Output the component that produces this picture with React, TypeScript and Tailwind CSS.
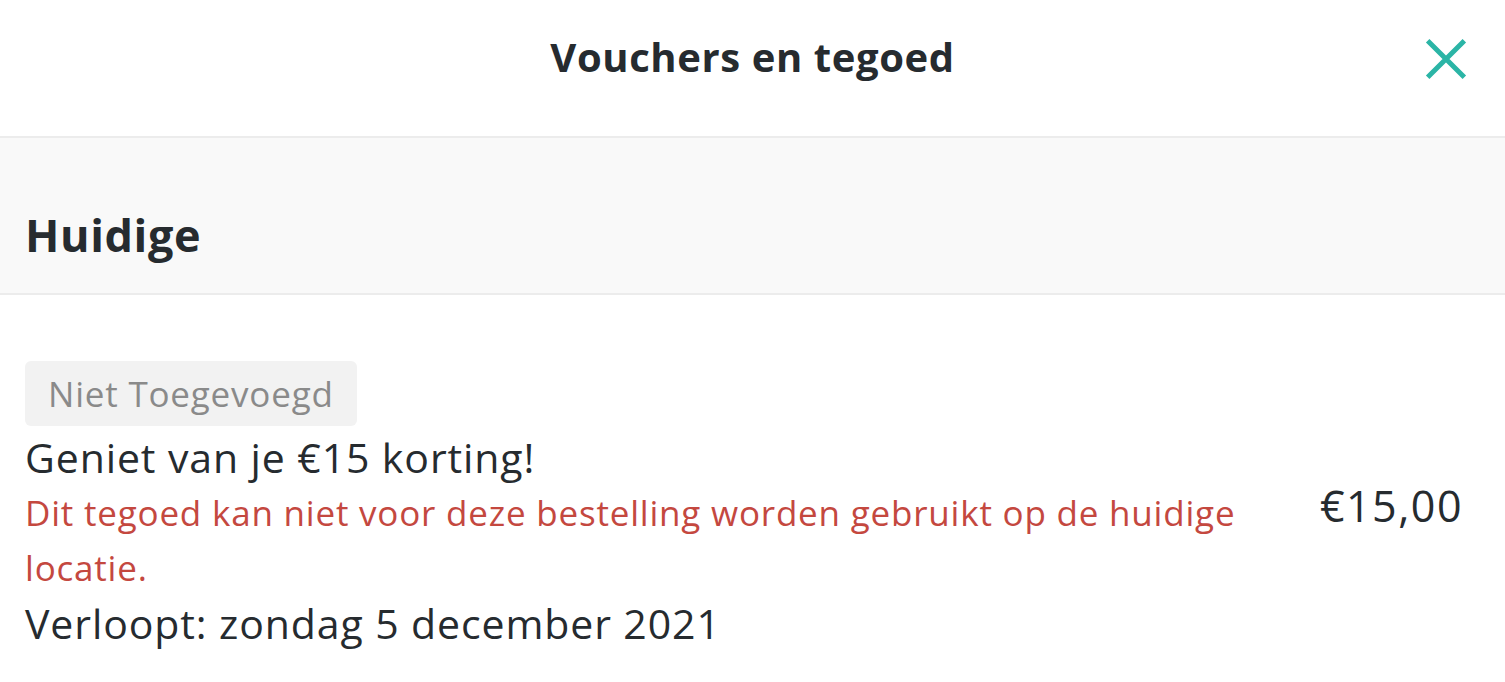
import React from 'react';

const font = { fontFamily: '"Open Sans", "Noto Sans", sans-serif' };

function CloseIcon() {
  return (
    <svg viewBox="0 0 24 24" className="h-[44px] w-[44px]" fill="none" stroke="#2bb5a6" strokeWidth={2.7} strokeLinecap="butt">
      <path d="M2 2 L22 22 M22 2 L2 22" />
    </svg>
  );
}

export default function App() {
  return (
    <div className="min-h-screen w-full bg-white text-[#262b2f]" style={font}>
      {/* Header */}
      <div className="relative flex h-[138px] items-center justify-center border-b-2 border-[#ececec]">
        <h1 className="-mt-[22px] text-[40px] font-bold leading-none tracking-[0.6px]">Vouchers en tegoed</h1>
        <button className="absolute right-[37px] top-[37px]">
          <CloseIcon />
        </button>
      </div>

      {/* Section title */}
      <div className="flex h-[157px] items-end border-b-2 border-[#ececec] bg-[#f9f9f9] px-[25px] pb-[36px]">
        <h2 className="text-[45px] font-bold leading-none tracking-[0.6px]">Huidige</h2>
      </div>

      {/* Voucher */}
      <div className="flex items-center justify-between pl-[25px] pr-[42px] pt-[66px]">
        <div className="flex flex-col">
          <span className="self-start rounded-[6px] bg-[#f2f2f2] px-[23px] py-[12px] text-[35px] leading-[41px] tracking-[0.8px] text-[#8a8a8a]">
            Niet Toegevoegd
          </span>
          <div className="mt-[4px] text-[41px] leading-[55px] tracking-[0.9px]">Geniet van je €15 korting!</div>
          <div className="max-w-[1240px] text-[35px] leading-[55px] tracking-[0.8px] text-[#c4483f]">
            Dit tegoed kan niet voor deze bestelling worden gebruikt op de huidige locatie.
          </div>
          <div className="text-[41px] leading-[56px] tracking-[0.9px]">Verloopt: zondag 5 december 2021</div>
        </div>
        <div className="text-[43px] tracking-[1.5px]">€15,00</div>
      </div>
    </div>
  );
}
